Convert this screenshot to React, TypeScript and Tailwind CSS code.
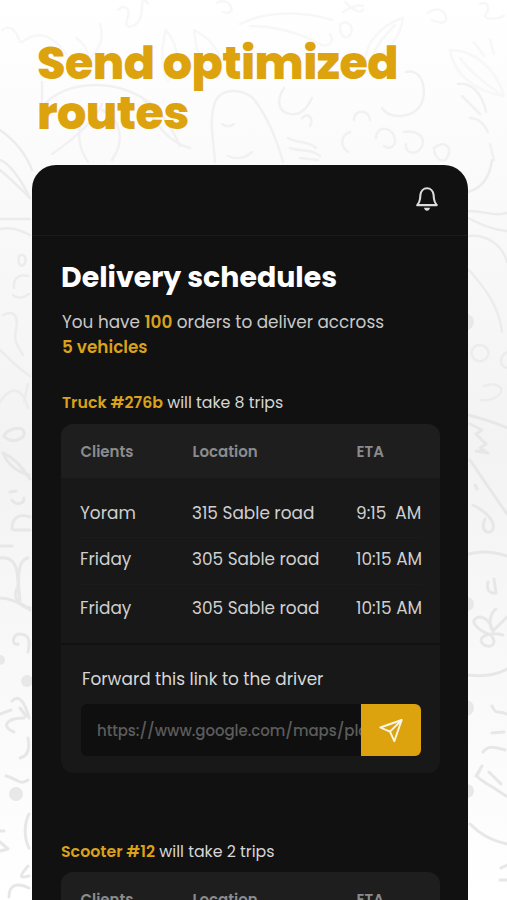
import type { ReactNode } from 'react'

type Trip = {
  client: string
  location: string
  eta: string
}

const truckTrips: Trip[] = [
  { client: 'Yoram', location: '315 Sable road', eta: '9:15  AM' },
  { client: 'Friday', location: '305 Sable road', eta: '10:15 AM' },
  { client: 'Friday', location: '305 Sable road', eta: '10:15 AM' },
]

function BellIcon() {
  return (
    <svg className="-mt-0.5" width="24" height="26" viewBox="0 0 24 26" fill="none" stroke="#dcdcdc" strokeWidth="2.1" strokeLinejoin="round">
      <path d="M2.2 19.1h19.6c-1.7-2-2.6-3.6-2.9-6.6l-.3-3.6C18.200 5.200 15.500 2.300 12 2.300S5.800 5.200 5.400 8.900l-.3 3.600c-.3 3-1.200 4.600-2.900 6.600z" />
      <path d="M9 21.800h6c-.4 1.900-1.500 2.900-3 2.900s-2.600-1-3-2.900z" fill="#dcdcdc" stroke="none" />
    </svg>
  )
}

function SendIcon() {
  return (
    <svg width="24" height="25" viewBox="0 0 24 25" fill="none" stroke="#fbf6e6" strokeWidth="1.9" strokeLinejoin="round">
      <path d="M22.700 2L1.300 9.500l9.700 4.200 4.300 9.500z" />
      <path d="M22.700 2L11 13.700" />
    </svg>
  )
}

/* Hand drawn food doodles behind the phone */
function Doodles() {
  return (
    <svg className="absolute inset-0" width="507" height="900" viewBox="0 0 507 900" fill="none" strokeLinecap="round" strokeLinejoin="round">
      <g stroke="#f7f7f7" strokeWidth="2.500">
        <path d="M118 10c6-6 12-2 10 6s-4 12 4 10 10-12 10-20 4-6 6-2" />
        <path d="M217 3c4-3 12-2 14 4s-4 7-8 5M345 2c6 6 14 12 18 8M343 12c6-4 14-8 20-6" />
        <path d="M240 24c24-12 58-14 92-4M250 26c22 0 48 6 66 16 12 8 20 0 14-8" />
        <path d="M340 25c6-6 14 0 11 8s-12 4-11-8zM428 13c8-6 16-4 18 4s-8 6-14 3M480 4c8-4 10 4 6 10s10 6 18 2" />
        <path d="M403 18c-20 6-38 24-38 44 14-2 36-22 38-44zM395 25c-10 10-18 20-22 30" />
        <path d="M166 30c-6 20-4 42 2 52 10-14 14-32-2-52zM194 30c2 24 10 40 24 48 10-12 0-36-24-48z" />
        <path d="M2 30c8-6 14 0 18 12M22 42c16-12 30-8 44 12M76 38c12 8 14 18 12 30M100 24c4 14 0 24-8 32" />
        <path d="M450 50c24 0 46 18 54 46-26-4-50-20-54-46zM460 58c10 14 24 24 40 36M474 42l10 14M490 40l4 14" />
      </g>
      <g stroke="#f1f1f1" strokeWidth="2.500">
        <path d="M40 110c20-28 68-34 106-10 14 10 26 28 34 46M52 154c30-20 46-40 50-50" />
        <path d="M84 112c-8 18-6 36 4 50M102 110c18 8 24 30 10 50M144 100c10 24 24 42 46 48M42 82v28" />
        <path d="M215 162c-2-26-6-42 0-60 6-14 26-14 38-4 14 18 24 42 30 64M222 124c4 3 8 3 12 0M228 156c8 4 18 2 24-4" />
        <path d="M284 88c-8 12-6 24 6 26s18-8 22-16M302 118c6-6 12 0 8 8M406 72c18-4 22 22 14 34s-30 14-38 2" />
        <path d="M350 132c-10 4-10 14-2 20M376 138c0-12 14-12 18-2s-4 14-10 10M354 120c0-12 16-10 16 0M404 132c12-2 22 4 18 14s-18 8-16-2" />
        <path d="M288 138c10 6 20 2 28 10M290 148c10 4 20 0 30 8M300 158l18 2M434 148c10-8 18-2 14 8s-14 2-14-8" />
        <path d="M458 84c12-2 24 8 28 28M462 96l18 18M470 118c8 0 14 6 18 14M490 144l4 16" />
      </g>
      <g stroke="#ececec" strokeWidth="2.500">
        <path d="M0 130c14 10 26 24 32 40M0 160c10 4 20 18 30 38M0 170c12 10 20 18 30 28M0 219h30M0 229c10-2 18 0 30 6" />
        <path d="M492 160c-2 16-10 28-24 32M468 211c16 0 28 6 39 2M468 218c16 8 26 12 39 13M468 236c18-2 34 8 39 26M469 270c16 18 30 36 33 62" />
        <path d="M19 256c5-3 8 2 6 7s-8 3-6-7M28 276c-10-3-15 4-14 12M13 295c4 4 10 3 16-1M3 315c10-5 16 0 13 14s3 18 7 26M0 350c10 10 20 20 30 26M0 402c10-16 22-16 28 6M28 384l-4 18" />
        <path d="M507 352c-8 4-8 14 0 16M478 345c-10 2-8 18 4 16 10-4 8-16-4-16zM484 386c8-4 20 0 17 6s-12 9-20 8" />
      </g>
      <g stroke="#e7e7e7" strokeWidth="3">
        <path d="M4 436c2-6 18-12 20-4s-14 12-20 4zM3 453c10 4 18 12 27 26M3 453c4 10 12 18 26 22M10 492l6-1M12 500c4 6 12 4 12-2M12 529c0-12 8-16 18-12" />
        <path d="M469 415c12 4 24 6 38 13M470 424l12 6-6 4 10 10-6 4 8 5-12-2M470 460c12 18 26 38 37 54M475 485l2 4M473 505c16 8 22 18 20 24s-14 4-8-10" />
        <path d="M14 530h16M0 546h12M0 558c16-2 18 12 18 28-6 12 0 18 12 22M28 558c-12 2-10 26-8 42M0 598c12 0 20 6 30 12" />
        <path d="M469 554c14-4 26-2 38 2M488 582c-2 8 2 12 8 11l-2-14M468 675c16 2 28 0 39-6" />
        <path d="M496 609c-6 4-8 16-3 22l14-14M493 631c-4-14-14-16-18-12s4 12 16 16c8 10-2 14-8 9s2-13 20-9" />
        <path d="M18 634c-6 2-6 12 0 10M18 634c10 0 13 4 10 18M12 701c6-6 12-2 17 17M20 708l6 8M0 714l11-4M14 732c-12-4-10-14 10-14M28 738c2 10 0 18-8 20M6 776c10 2 14 10 22 4" />
        <path d="M506 714c-6-4-10 2-14-8M492 733l12-1M483 752c6-8 14-4 22-2M480 770c-6 8-2 8 14 18l12 8M482 766l-6 10M489 772l12 12" />
        <path d="M470 824c10 10 20 16 37 20M501 868l6-3M500 880h7M29 814c-6 12-4 26 0 34M0 831h4M0 842l8 7-8 2M28 866c-10 12-8 12 1 10M9 897c0-14 10-14 20-9" />
      </g>
      <g fill="#e8e8e8">
        <circle cx="27" cy="681" r="6" />
        <circle cx="16" cy="794" r="7" />
        <circle cx="0" cy="660" r="5" />
        <circle cx="466" cy="322" r="8" />
        <circle cx="467" cy="604" r="7" />
        <circle cx="466" cy="708" r="8" />
        <circle cx="467" cy="791" r="7" />
      </g>
    </svg>
  )
}

function VehicleTitle({ name, children, className }: { name: string; children: ReactNode; className: string }) {
  return (
    <p className={`text-[15.8px] leading-6 whitespace-nowrap text-[#d6d6d6] ${className}`}>
      <span className="font-semibold text-[#d9a21a]">{name}</span> {children}
    </p>
  )
}

function TableHeader() {
  return (
    <div className="grid h-[54px] grid-cols-[112px_164px_1fr] items-center rounded-t-xl bg-[#1e1e1e] pt-0.5 pl-[19.5px] text-[15px] font-semibold text-[#8b8b8d]">
      <span>Clients</span>
      <span>Location</span>
      <span>ETA</span>
    </div>
  )
}

export default function App() {
  return (
    <div className="relative h-[900px] w-[507px] overflow-hidden bg-linear-to-b from-white via-[#f3f3f3] to-white font-['Poppins','Inter',sans-serif]">
      <Doodles />
      <div className="relative flex h-full flex-col pt-[38px]">
        <h1 className="mb-[27px] pl-[37px] text-[46px] leading-[50px] font-extrabold tracking-[-0.55px] text-[#dda30f]">
          Send optimized
          <br />
          routes
        </h1>

        <main className="ml-8 h-[735px] w-[436px] shrink-0 overflow-hidden rounded-t-[24px] bg-[#111111]">
          <header className="flex h-[71px] items-center justify-end border-b border-[#1b1b1b] pr-[29px]">
            <BellIcon />
          </header>

          <section className="pt-[23px] pr-7 pl-[29px]">
            <h2 className="text-[28.4px] leading-9 font-bold whitespace-nowrap text-white">Delivery schedules</h2>
            <p className="mt-[15px] pl-px text-[16.85px] leading-[25px] whitespace-nowrap text-[#c8c8c8]">
              You have <span className="font-semibold text-[#d9a21a]">100</span> orders to deliver accross
              <br />
              <span className="font-semibold text-[#d9a21a]">5 vehicles</span>
            </p>

            <VehicleTitle name="Truck #276b" className="mt-[31px] pl-px">will take 8 trips</VehicleTitle>

            <div className="mt-[9px]">
              <TableHeader />
              <div className="h-[165px] bg-[#181818] px-[19px] pt-[13px]">
                {truckTrips.map((trip, i) => (
                  <div
                    key={i}
                    className="grid h-[47px] grid-cols-[112px_164px_1fr] items-center border-b border-[#1b1b1b] text-[16.9px] whitespace-pre text-[#cfcfcf] last:border-0 even:pb-0.5"
                  >
                    <span>{trip.client}</span>
                    <span>{trip.location}</span>
                    <span>{trip.eta}</span>
                  </div>
                ))}
              </div>
              <div className="mt-[2px] h-[128px] rounded-b-xl bg-[#181818] px-5 pt-[22px]">
                <p className="pl-px text-[16.9px] leading-6 text-[#d6d6d6]">Forward this link to the driver</p>
                <div className="mt-[13px] flex h-[52px] w-[340px] overflow-hidden rounded-md bg-[#0f0f0f]">
                  <div className="flex w-[280px] items-center overflow-hidden pt-0.5 pl-4 text-[15px] font-medium tracking-[-0.05px] whitespace-nowrap text-[#5c5c5c]">
                    https://www.google.com/maps/place
                  </div>
                  <button className="flex w-[60px] items-center justify-center bg-[#dda30f]">
                    <SendIcon />
                  </button>
                </div>
              </div>
            </div>

            <VehicleTitle name="Scooter #12" className="mt-[67px]">will take 2 trips</VehicleTitle>
            <div className="mt-2">
              <TableHeader />
            </div>
          </section>
        </main>
      </div>
    </div>
  )
}
